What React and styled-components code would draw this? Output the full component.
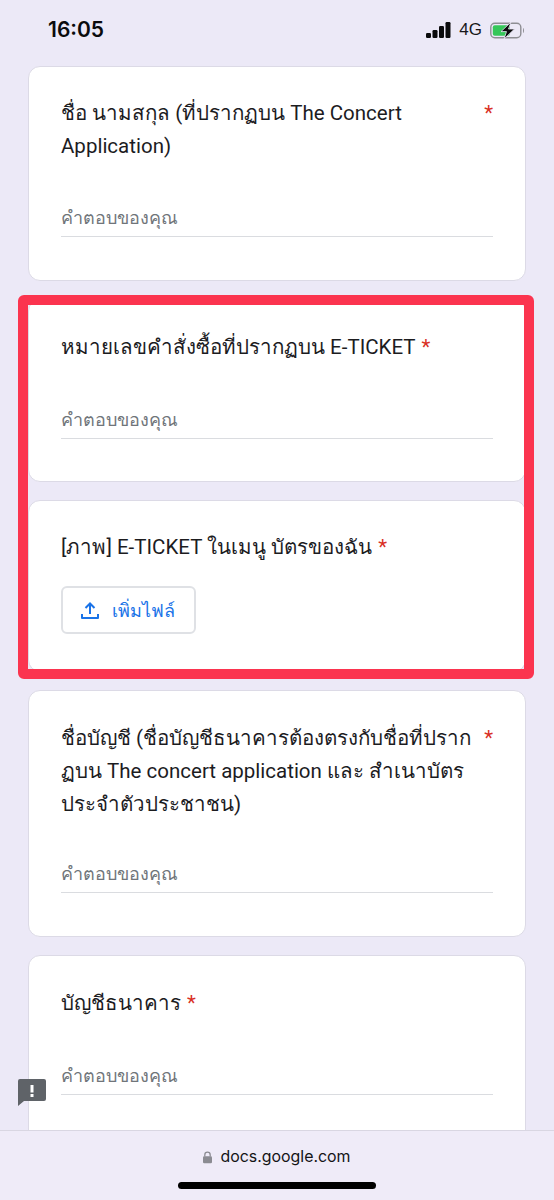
import React from 'react';
import styled, { createGlobalStyle } from 'styled-components';

const Global = createGlobalStyle`
  html, body { margin: 0; padding: 0; background: #ece9f7; }
  * { box-sizing: border-box; }
`;

const Page = styled.div`
  position: relative;
  width: 554px;
  height: 1200px;
  overflow: hidden;
  background: #ece9f7;
  font-family: Roboto, "Noto Sans", "Liberation Sans", sans-serif;
  color: #1c1c1f;
`;

const StatusBar = styled.div`
  height: 66px;
  padding: 15px 29px 0 48px;
  display: flex;
  justify-content: space-between;
  align-items: flex-start;
`;

const Time = styled.div`
  font-family: Inter, "Liberation Sans", sans-serif;
  font-size: 21px;
  font-weight: 600;
  line-height: 30px;
  color: #0b0b0d;
`;

const StatusIcons = styled.div`
  display: flex;
  align-items: center;
  height: 30px;
  gap: 8px;
`;

const Network = styled.span`
  font-family: "Liberation Sans", sans-serif;
  font-size: 17px;
  color: #17171a;
`;

const Stack = styled.div`
  display: flex;
  flex-direction: column;
  gap: 18px;
  padding: 0 28px;
`;

const Card = styled.section`
  height: ${p => p.$h}px;
  background: #fff;
  border: 1.5px solid #dcdae6;
  border-radius: 12px;
  padding: ${p => p.$top}px 32px 0;
`;

const Question = styled.div`
  display: flex;
  justify-content: space-between;
  font-size: 20.5px;
  line-height: 33px;
  white-space: nowrap;
`;

const Star = styled.span`
  color: #d93025;
  ${p => (p.$inline ? 'margin-left: 6px;' : '')}
`;

const Answer = styled.div`
  margin-top: ${p => p.$gap}px;
  height: 34px;
  border-bottom: 1.5px solid #dadce0;
  font-size: 18px;
  line-height: 30px;
  color: #70757a;
`;

const UploadButton = styled.div`
  margin-top: 22px;
  width: 135px;
  height: 48px;
  border: 2px solid #dfe1e5;
  border-radius: 6px;
  display: flex;
  align-items: center;
  padding-left: 18px;
  gap: 13px;
  color: #1a73e8;
  font-size: 18px;
  font-weight: 500;
`;

const Highlight = styled.div`
  position: absolute;
  left: 18px;
  top: 295px;
  width: 516px;
  height: 384px;
  border: 10px solid #fb344f;
  border-radius: 6px;
  pointer-events: none;
`;

const Feedback = styled.svg`
  position: absolute;
  left: 18px;
  top: 1079px;
`;

const BottomBar = styled.div`
  position: absolute;
  left: 0;
  right: 0;
  bottom: 0;
  height: 70px;
  background: #efebf8;
  border-top: 1px solid #d9d6e2;
  display: flex;
  flex-direction: column;
  align-items: center;
`;

const Url = styled.div`
  margin-top: 15px;
  display: flex;
  align-items: center;
  gap: 8px;
  font-family: Inter, "Liberation Sans", sans-serif;
  font-size: 15.9px;
  line-height: 22px;
  color: #141416;
`;

const HomeIndicator = styled.div`
  margin-top: 14px;
  width: 198px;
  height: 7px;
  border-radius: 4px;
  background: #000;
`;

const Title = ({ lines, spread }) => {
  const body = lines.map((line, i) => (
    <React.Fragment key={line}>
      {i > 0 && <br />}
      {line}
    </React.Fragment>
  ));
  return spread ? (
    <Question>
      <span>{body}</span>
      <Star>*</Star>
    </Question>
  ) : (
    <Question>
      <span>
        {body}
        <Star $inline>*</Star>
      </span>
    </Question>
  );
};

const placeholder = 'คำตอบของคุณ';

export default function App() {
  return (
    <Page>
      <Global />
      <StatusBar>
        <Time>16:05</Time>
        <StatusIcons>
          <svg width="25" height="16" viewBox="0 0 25 16">
            <rect x="0" y="11" width="5" height="5" rx="1.2" fill="#0b0b0d" />
            <rect x="6.5" y="8" width="5" height="8" rx="1.2" fill="#0b0b0d" />
            <rect x="13" y="4" width="5" height="12" rx="1.2" fill="#0b0b0d" />
            <rect x="19.5" y="0" width="5" height="16" rx="1.2" fill="#0b0b0d" />
          </svg>
          <Network>4G</Network>
          <svg width="35" height="17" viewBox="0 0 35 17">
            <rect x="0.8" y="1.3" width="30" height="14.4" rx="4" fill="none" stroke="#8e8e93" strokeWidth="1.4" />
            <rect x="2.8" y="3.3" width="17" height="10.4" rx="2" fill="#35c759" />
            <path d="M33 6 C34.3 6.5 34.3 10.5 33 11 Z" fill="#8e8e93" />
            <path d="M21 0 L11 9.6 H16.5 L14 17 L24.5 7 H18.5 Z" fill="#0b0b0d" stroke="#ece9f7" strokeWidth="0.8" />
          </svg>
        </StatusIcons>
      </StatusBar>

      <Stack>
        <Card $h={215} $top={30}>
          <Title spread lines={['ชื่อ นามสกุล (ที่ปรากฏบน The Concert', 'Application)']} />
          <Answer $gap={40}>{placeholder}</Answer>
        </Card>
        <Card $h={183} $top={31}>
          <Title lines={['หมายเลขคำสั่งซื้อที่ปรากฏบน E-TICKET']} />
          <Answer $gap={41}>{placeholder}</Answer>
        </Card>
        <Card $h={172} $top={30}>
          <Title lines={['[ภาพ] E-TICKET ในเมนู บัตรของฉัน']} />
          <UploadButton>
            <svg width="18" height="18" viewBox="0 0 18 18" fill="none" stroke="#1a73e8" strokeWidth="2">
              <path d="M9 13V2.5M4.5 7L9 2.5L13.5 7" />
              <path d="M1 13v4h16v-4" strokeLinejoin="round" />
            </svg>
            <span>เพิ่มไฟล์</span>
          </UploadButton>
        </Card>
        <Card $h={247} $top={31}>
          <Title spread lines={['ชื่อบัญชี (ชื่อบัญชีธนาคารต้องตรงกับชื่อที่ปราก', 'ฏบน The concert application และ สำเนาบัตร', 'ประจำตัวประชาชน)']} />
          <Answer $gap={38}>{placeholder}</Answer>
        </Card>
        <Card $h={300} $top={31}>
          <Title lines={['บัญชีธนาคาร']} />
          <Answer $gap={41}>{placeholder}</Answer>
        </Card>
      </Stack>

      <Highlight />

      <Feedback width="28" height="27" viewBox="0 0 28 27">
        <path d="M2 0H26a2 2 0 0 1 2 2V20a2 2 0 0 1-2 2H6L0 27V2A2 2 0 0 1 2 0Z" fill="#5f6368" />
        <rect x="12.5" y="6" width="3" height="7.5" fill="#fff" />
        <rect x="12.5" y="15" width="3" height="3" fill="#fff" />
      </Feedback>

      <BottomBar>
        <Url>
          <svg width="9" height="13" viewBox="0 0 10 13">
            <path d="M2 5.5V3.6a3 3 0 0 1 6 0V5.5" fill="none" stroke="#8b8b92" strokeWidth="1.4" />
            <rect x="0" y="5.2" width="10" height="7.8" rx="1.4" fill="#8b8b92" />
          </svg>
          <span>docs.google.com</span>
        </Url>
        <HomeIndicator />
      </BottomBar>
    </Page>
  );
}
